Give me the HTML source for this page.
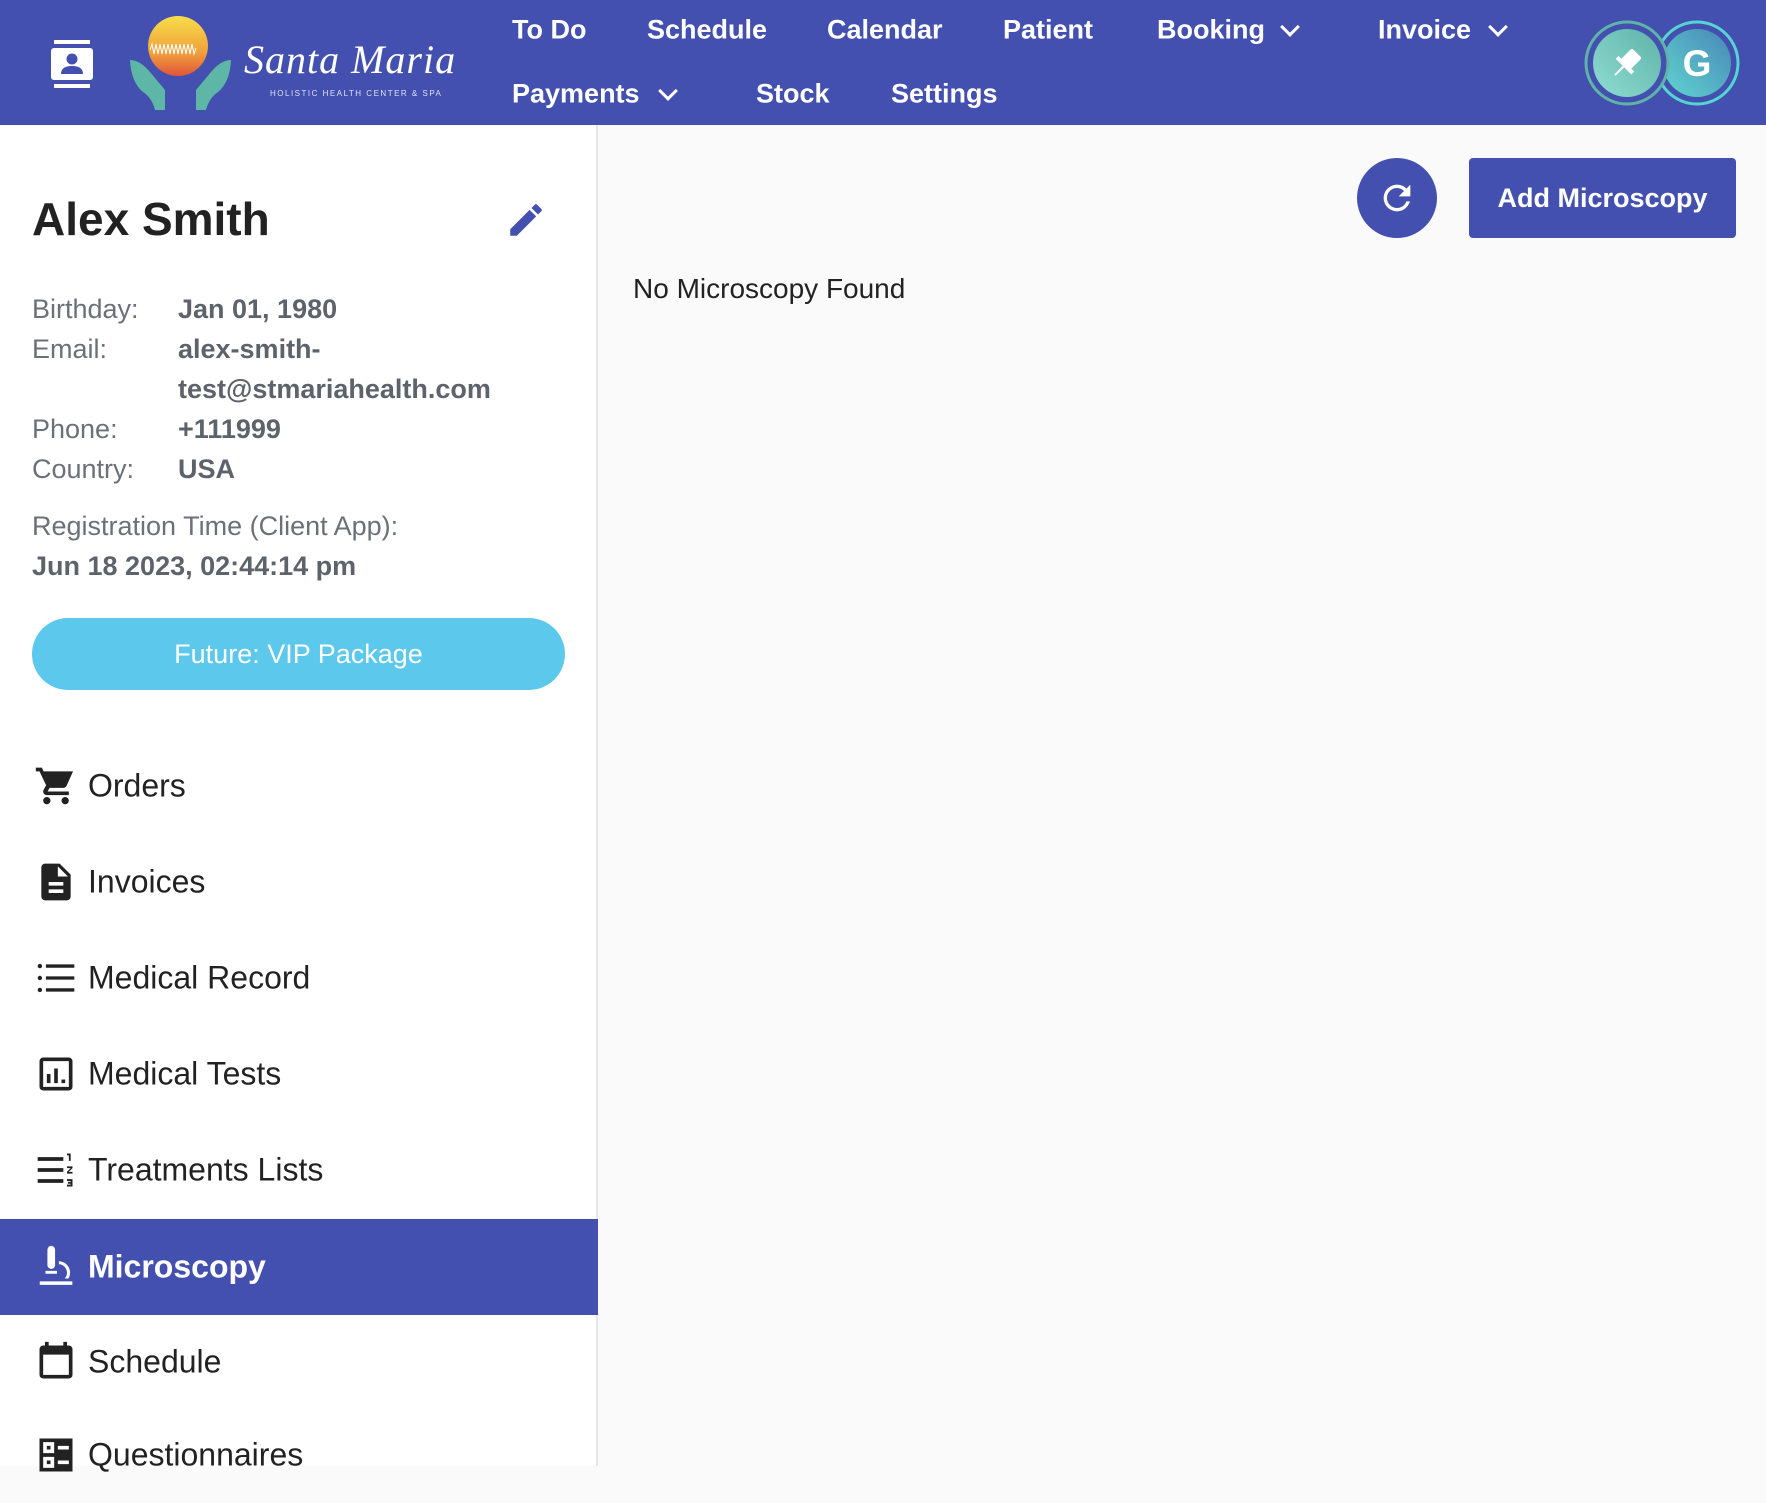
<!DOCTYPE html>
<html><head><meta charset="utf-8"><style>
*{box-sizing:border-box;margin:0;padding:0}
body{width:1766px;height:1466px;overflow:hidden;background:#fafafa;font-family:"Liberation Sans",Arial,sans-serif;position:relative}
.hdr{position:absolute;left:0;top:0;width:1766px;height:125px;background:#4350af}
.nav{position:absolute;color:#fff;font-size:27px;font-weight:bold;white-space:nowrap;transform:translateY(-50%)}
.chev{position:absolute;width:14px;height:14px;border-right:3px solid #fff;border-bottom:3px solid #fff;transform:rotate(45deg)}
.side{position:absolute;left:0;top:125px;width:598px;height:1341px;background:#fff;border-right:2px solid #e6e6e6}
.t{position:absolute;white-space:nowrap}
.lab{color:#6b7079;font-size:27px}
.val{color:#5d626b;font-size:27px;font-weight:bold;left:178px}
.mi{position:absolute;left:0;width:598px;height:96px}
.mi span{position:absolute;left:88px;top:50%;transform:translateY(-50%);font-size:32px;color:#222}
.mi svg{position:absolute;left:34px;top:50%;transform:translateY(-50%)}
</style></head><body>
<div class="hdr">
 <svg style="position:absolute;left:50px;top:38px" width="44" height="52" viewBox="0 0 44 52"><rect x="4" y="2" width="36" height="4" fill="#fff"/><rect x="4" y="46" width="36" height="4" fill="#fff"/><rect x="1" y="10" width="42" height="32" rx="3" fill="#fff"/><circle cx="22" cy="21" r="5.5" fill="#4350af"/><path d="M11 36 q0-8 11-8 q11 0 11 8z" fill="#4350af"/></svg>
 <svg style="position:absolute;left:128px;top:15px" width="105" height="95" viewBox="0 0 105 95">
  <defs><linearGradient id="sun" x1="0" y1="0" x2="0" y2="1"><stop offset="0" stop-color="#f7dd4a"/><stop offset="0.6" stop-color="#f0a23c"/><stop offset="1" stop-color="#e0553a"/></linearGradient></defs>
  <circle cx="50" cy="31" r="30" fill="url(#sun)"/>
  <path d="M22 35 l2-6 2 10 2-10 2 10 2-10 2 10 2-10 2 10 2-10 2 10 2-10 2 10 2-10 2 10 2-10 2 10 2-10 2 10 2-10 2 10 2-10 2 10 2-6" stroke="#fff" stroke-width="1" fill="none"/>
  <path d="M2 45 q10 0 20 12 q10 12 15 18 l0 20 l-10 0 q-3-12-12-18 q-12-10-13-32z" fill="#5eb6a6"/>
  <path d="M103 45 q-10 0-20 12 q-10 12-15 18 l0 20 l10 0 q3-12 12-18 q12-10 13-32z" fill="#5eb6a6"/>
 </svg>
 <div class="t" style="left:244px;top:36px;color:#fff;font-family:'Liberation Serif',serif;font-style:italic;font-size:40px;letter-spacing:1px">Santa Maria</div>
 <div class="t" style="left:270px;top:89px;color:#dfe2f5;font-size:8px;letter-spacing:1.5px">HOLISTIC HEALTH CENTER &amp; SPA</div>
 <div class="nav" style="left:512px;top:30px">To Do</div>
 <div class="nav" style="left:647px;top:30px">Schedule</div>
 <div class="nav" style="left:827px;top:30px">Calendar</div>
 <div class="nav" style="left:1003px;top:30px">Patient</div>
 <div class="nav" style="left:1157px;top:30px">Booking</div><div class="chev" style="left:1283px;top:20px"></div>
 <div class="nav" style="left:1378px;top:30px">Invoice</div><div class="chev" style="left:1491px;top:20px"></div>
 <div class="nav" style="left:512px;top:94px">Payments</div><div class="chev" style="left:661px;top:84px"></div>
 <div class="nav" style="left:756px;top:94px">Stock</div>
 <div class="nav" style="left:891px;top:94px">Settings</div>
 <svg style="position:absolute;left:1580px;top:16px" width="180" height="94" viewBox="0 0 180 94">
  <defs><linearGradient id="g1" x1="0" y1="1" x2="1" y2="0"><stop offset="0" stop-color="#8fdcd3"/><stop offset="1" stop-color="#5fb3a8"/></linearGradient>
  <linearGradient id="g2" x1="0" y1="1" x2="1" y2="0"><stop offset="0" stop-color="#5fd6cf"/><stop offset="1" stop-color="#4a86b8"/></linearGradient></defs>
  <circle cx="117" cy="47" r="41" fill="none" stroke="#56d4d2" stroke-width="3"/>
  <circle cx="117" cy="47" r="34" fill="url(#g2)"/>
  <text x="117" y="60" text-anchor="middle" fill="#fff" font-family="Liberation Sans" font-weight="bold" font-size="37">G</text>
  <circle cx="47" cy="47" r="41" fill="#4350af" stroke="#5fb3a8" stroke-width="3"/>
  <circle cx="47" cy="47" r="34" fill="url(#g1)"/>
  <g transform="translate(47 47) rotate(45)"><rect x="-7" y="-14" width="14" height="16" rx="2" fill="#fff"/><rect x="-11" y="1" width="22" height="4" fill="#fff"/><rect x="-1" y="4" width="2" height="13" fill="#fff"/></g>
 </svg>
</div>
<div class="side">
 <div class="t" style="left:32px;top:67px;font-size:46px;font-weight:bold;color:#222">Alex Smith</div>
 <svg style="position:absolute;left:505px;top:74px" width="42" height="42" viewBox="0 0 24 24"><path d="M3 17.25V21h3.75L17.81 9.94l-3.75-3.75L3 17.25zM20.71 7.04a1 1 0 0 0 0-1.41l-2.34-2.34a1 1 0 0 0-1.41 0l-1.83 1.83 3.75 3.75 1.83-1.83z" fill="#4350af"/></svg>
 <div class="t lab" style="left:32px;top:169px">Birthday:</div><div class="t val" style="top:169px">Jan 01, 1980</div>
 <div class="t lab" style="left:32px;top:209px">Email:</div><div class="t val" style="top:209px">alex-smith-</div>
 <div class="t val" style="top:249px">test@stmariahealth.com</div>
 <div class="t lab" style="left:32px;top:289px">Phone:</div><div class="t val" style="top:289px">+111999</div>
 <div class="t lab" style="left:32px;top:329px">Country:</div><div class="t val" style="top:329px">USA</div>
 <div class="t lab" style="left:32px;top:386px">Registration Time (Client App):</div>
 <div class="t val" style="left:32px;top:426px">Jun 18 2023, 02:44:14 pm</div>
 <div style="position:absolute;left:32px;top:493px;width:533px;height:72px;border-radius:36px;background:#5bc8ec;color:#fff;font-size:27px;text-align:center;line-height:72px">Future: VIP Package</div>
 <div class="mi" style="top:613px"><svg width="44" height="44" viewBox="0 0 24 24"><path d="M7 18a2 2 0 1 0 0 4 2 2 0 0 0 0-4zM1 2v2h2l3.6 7.59-1.35 2.45A2 2 0 0 0 7 17h12v-2H7.42l1.1-2h7.45a2 2 0 0 0 1.75-1.03L21.3 4H5.21l-.94-2H1zm16 16a2 2 0 1 0 0 4 2 2 0 0 0 0-4z" fill="#222"/></svg><span>Orders</span></div>
 <div class="mi" style="top:709px"><svg width="44" height="44" viewBox="0 0 24 24"><path d="M14 2H6a2 2 0 0 0-2 2v16a2 2 0 0 0 2 2h12a2 2 0 0 0 2-2V8l-6-6zm2 16H8v-2h8v2zm0-4H8v-2h8v2zm-3-5V3.5L18.5 9H13z" fill="#222"/></svg><span>Invoices</span></div>
 <div class="mi" style="top:805px"><svg width="44" height="44" viewBox="0 0 24 24"><path d="M2 5.5a1.2 1.2 0 1 0 2.4 0 1.2 1.2 0 0 0-2.4 0zm0 6.5a1.2 1.2 0 1 0 2.4 0 1.2 1.2 0 0 0-2.4 0zm0 6.5a1.2 1.2 0 1 0 2.4 0 1.2 1.2 0 0 0-2.4 0zM6.5 4.6h15.5v1.8H6.5zm0 6.5h15.5v1.8H6.5zm0 6.5h15.5v1.8H6.5z" fill="#222"/></svg><span>Medical Record</span></div>
 <div class="mi" style="top:901px"><svg width="44" height="44" viewBox="0 0 24 24"><path d="M19 3H5a2 2 0 0 0-2 2v14a2 2 0 0 0 2 2h14a2 2 0 0 0 2-2V5a2 2 0 0 0-2-2zm0 16H5V5h14v14zM7 12h2v5H7zm4-3h2v8h-2zm4 6h2v2h-2z" fill="#222"/></svg><span>Medical Tests</span></div>
 <div class="mi" style="top:997px"><svg width="44" height="44" viewBox="0 0 24 24"><path d="M2 5h14v2H2zm0 6h14v2H2zm0 6h14v2H2zM18 3h2v4h-1V4h-1zm0 7h3v1l-2 2h2v1h-3v-1l2-2h-2zm0 7h3v4h-3v-1h2v-.5h-1.5v-1H20V18h-2z" fill="#222"/></svg><span>Treatments Lists</span></div>
 <div class="mi" style="top:1094px;background:#4350af"><svg width="46" height="46" viewBox="0 0 24 24"><path d="M7 3a2 2 0 0 1 4 0v8a2 2 0 0 1-4 0zM6 14h6v1.5H6zM13 9a6 6 0 0 1 5 9h-2a4.5 4.5 0 0 0-3-7.5zM3 19.5h17v1.8H3z" fill="#fff"/></svg><span style="color:#fff;font-weight:bold">Microscopy</span></div>
 <div class="mi" style="top:1189px"><svg width="44" height="44" viewBox="0 0 24 24"><path d="M19 3h-1V1h-2v2H8V1H6v2H5a2 2 0 0 0-2 2v14a2 2 0 0 0 2 2h14a2 2 0 0 0 2-2V5a2 2 0 0 0-2-2zm0 16H5V8h14v11z" fill="#222"/></svg><span>Schedule</span></div>
 <div class="mi" style="top:1282px"><svg width="44" height="44" viewBox="0 0 24 24"><path d="M3 3h18v18H3zm2 2v6h6V5zm2 2h2v2H7zm6 0v2h6V7zm-8 6v6h6v-6zm2 2h2v2H7zm6 0v2h6v-2z" fill="#222" fill-rule="evenodd"/></svg><span>Questionnaires</span></div>
</div>
<div style="position:absolute;left:1357px;top:158px;width:80px;height:80px;border-radius:50%;background:#4350af"></div>
<svg style="position:absolute;left:1377px;top:178px" width="40" height="40" viewBox="0 0 24 24"><path d="M17.65 6.35A7.96 7.96 0 0 0 12 4a8 8 0 1 0 7.73 10h-2.08A6 6 0 1 1 12 6c1.66 0 3.14.69 4.22 1.78L13 11h7V4l-2.35 2.35z" fill="#fff"/></svg>
<div style="position:absolute;left:1469px;top:158px;width:267px;height:80px;border-radius:4px;background:#4350af;color:#fff;font-size:27px;font-weight:bold;text-align:center;line-height:80px">Add Microscopy</div>
<div class="t" style="left:633px;top:273px;font-size:28px;color:#222">No Microscopy Found</div>
</body></html>
